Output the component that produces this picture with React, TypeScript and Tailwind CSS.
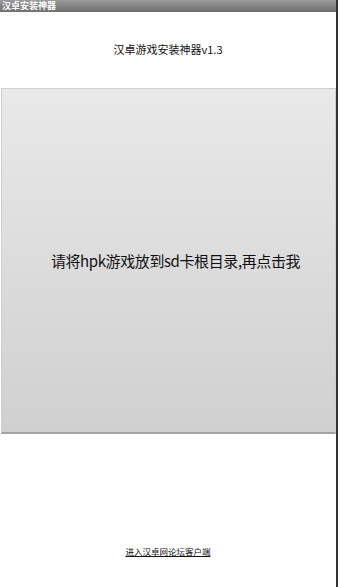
export default function App() {
  return (
    <div
      className="w-[338px] h-[587px] flex bg-white overflow-hidden"
      style={{ fontFamily: '"Noto Sans CJK SC", "Liberation Sans", sans-serif' }}
    >
      <div className="w-[336px] shrink-0 flex flex-col">
        {/* Title bar */}
        <div className="h-[12px] bg-gradient-to-b from-[#9a9a9a] to-[#6e6e6e] flex items-center px-[2px]">
          <span className="text-white text-[9px] leading-[12px] font-bold">汉卓安装神器</span>
        </div>

        <p className="mt-[30px] text-center text-[11px] leading-[14px] text-[#111]">汉卓游戏安装神器v1.3</p>

        {/* Big button */}
        <button className="mt-[32px] ml-[1px] w-[335px] h-[346px] pl-[14px] border border-[#cfcfcf] border-b-2 border-b-[#a3a3a3] bg-gradient-to-b from-[#e9e9e9] to-[#d0d0d0] flex items-center justify-center">
          <span className="text-[15px] leading-none text-[#111] tracking-[-0.4px]">请将hpk游戏放到sd卡根目录,再点击我</span>
        </button>

        <div className="flex-1" />
        <p className="mb-[30px] text-center text-[8.5px] leading-[12px] text-[#111] underline">进入汉卓网论坛客户端</p>
      </div>
      <div className="w-[2px] shrink-0 bg-[#333]" />
    </div>
  );
}
